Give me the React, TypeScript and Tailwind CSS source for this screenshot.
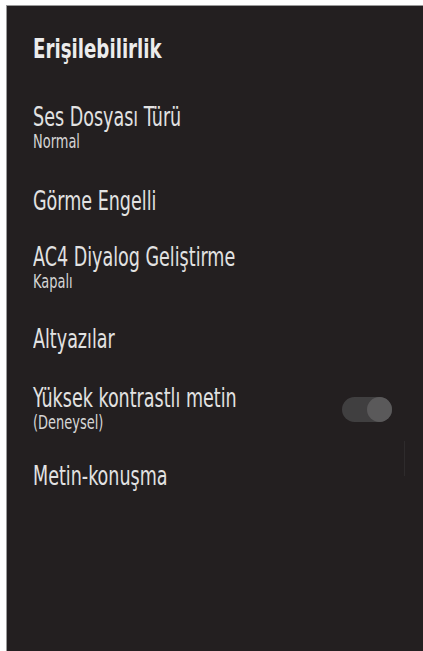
const items: { title: string; sub?: string; toggle?: boolean; gap: string }[] = [
  { title: "Ses Dosyası Türü", sub: "Normal", gap: "mt-[42px]" },
  { title: "Görme Engelli", gap: "mt-[37px]" },
  { title: "AC4 Diyalog Geliştirme", sub: "Kapalı", gap: "mt-[30px]" },
  { title: "Altyazılar", gap: "mt-[35px]" },
  { title: "Yüksek kontrastlı metin", sub: "(Deneysel)", toggle: true, gap: "mt-[33px]" },
  { title: "Metin-konuşma", gap: "mt-[31px]" },
];

export default function App() {
  return (
    <div
      className="w-[423px] h-[651px] bg-white pt-[5px] pl-[6px] overflow-hidden"
      style={{ fontFamily: '"DejaVu Sans Condensed", "DejaVu Sans", sans-serif' }}
    >
      <div className="relative h-full bg-[#231f20] border-t border-l border-[#9a9a9a] pl-[26px] pt-[29px]">
        <div className="text-[27px] leading-none font-bold text-[#ececec] whitespace-nowrap origin-left scale-x-[0.75]">
          Erişilebilirlik
        </div>

        {items.map((item) => (
          <div key={item.title} className={`${item.gap} flex items-start justify-between pr-[31px]`}>
            <div className="flex flex-col">
              <div className="text-[26px] leading-none text-[#e2e2e2] whitespace-nowrap origin-left scale-x-[0.75]">
                {item.title}
              </div>
              {item.sub && (
                <div className="text-[19px] leading-none text-[#d6d6d6] mt-[2px] whitespace-nowrap origin-left scale-x-[0.76]">
                  {item.sub}
                </div>
              )}
            </div>
            {item.toggle && (
              <div className="mt-[12px] flex h-[25px] w-[50px] items-center justify-end rounded-full bg-[#403f40]">
                <div className="h-[25px] w-[25px] rounded-full bg-[#5a595a]" />
              </div>
            )}
          </div>
        ))}

        <div className="absolute right-[18px] top-[435px] h-[35px] w-px bg-[#2e2b2c]" />
      </div>
    </div>
  );
}
